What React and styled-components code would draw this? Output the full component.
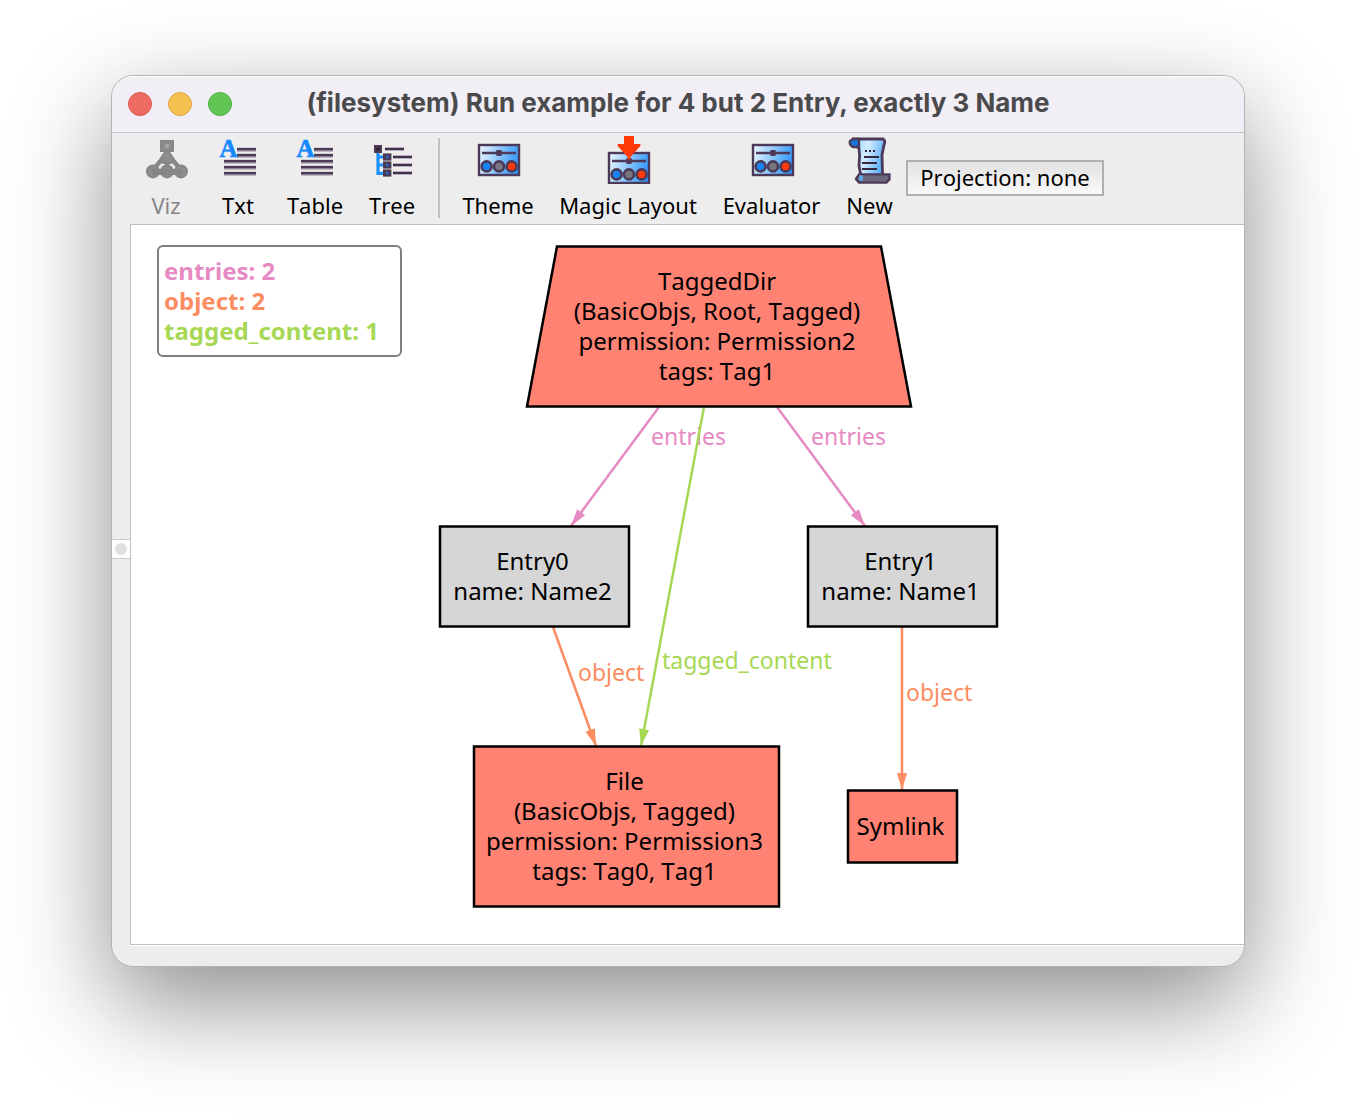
import React from "react";
import styled, { createGlobalStyle } from "styled-components";

const GlobalStyle = createGlobalStyle`
  *, *::before, *::after { box-sizing: border-box; }
  body {
    margin: 0;
    background: #ffffff;
    font-family: "Noto Sans", "DejaVu Sans", sans-serif;
    font-kerning: none;
    color: #000000;
  }
`;

const Desktop = styled.main`
  padding: 75px 111px 147px;
  overflow: hidden;
`;

const Window = styled.section`
  border: 1px solid #b4b4b4;
  border-radius: 22px;
  background: #ededed;
  overflow: hidden;
  box-shadow: 0 36px 100px rgba(0, 0, 0, 0.45);
`;

const TitleBar = styled.header`
  display: grid;
  grid-template-columns: 188px 1fr 188px;
  align-items: center;
  height: 57px;
  background: #f1eef5;
  border-bottom: 1px solid #c8c6ca;
  box-shadow: inset 0 1px 0 #ffffff;
`;

const Lights = styled.div`
  display: flex;
  gap: 16px;
  padding-left: 16px;
`;

const Light = styled.button`
  width: 24px;
  height: 24px;
  padding: 0;
  border: 1px solid ${(p) => p.$edge};
  border-radius: 50%;
  background: ${(p) => p.$fill};
`;

const Title = styled.h1`
  margin: 0;
  padding-bottom: 2px;
  font: 700 26px/32px Inter, "Liberation Sans", sans-serif;
  font-kerning: normal;
  color: #4a494c;
  text-align: center;
  white-space: nowrap;
`;

const ToolBar = styled.nav`
  display: flex;
  align-items: flex-start;
  height: 91px;
  padding: 3px 0 0 18px;
`;

const ToolButton = styled.button`
  display: flex;
  flex-direction: column;
  align-items: center;
  flex: none;
  width: ${(p) => p.$width}px;
  padding: 0;
  border: 0;
  background: none;
  font: 400 22px/30px "Noto Sans", "DejaVu Sans", sans-serif;
  font-kerning: none;
  color: #000000;
  white-space: nowrap;

  &:disabled { color: #868686; }
`;

const ToolIcon = styled.svg`
  display: block;
  width: 48px;
  height: 48px;
  margin-bottom: 6px;
`;

const Divider = styled.span`
  flex: none;
  width: 2px;
  height: 80px;
  margin: 2px 10px 0;
  background: #c2c2c2;
`;

const ProjectionButton = styled.button`
  min-width: 198px;
  height: 36px;
  margin-top: 24px;
  padding: 0 10px 2px;
  border: 2px solid #b0b0b0;
  background: linear-gradient(#e2e2e2, #f9f9f9);
  font: 400 22px/30px "Noto Sans", "DejaVu Sans", sans-serif;
  font-kerning: none;
  color: #000000;
  white-space: nowrap;
`;

const Body = styled.div`
  display: grid;
  grid-template-columns: 18px 1fr;
`;

const Gutter = styled.div`
  display: flex;
  align-items: center;
  padding-bottom: 72px;
`;

const Grip = styled.button`
  display: grid;
  place-items: center;
  width: 18px;
  height: 20px;
  padding: 0;
  border: solid #cccccc;
  border-width: 1px 0;
  background: #ffffff;

  &::before {
    content: "";
    width: 12px;
    height: 12px;
    border-radius: 50%;
    background: #e0e0e0;
  }
`;

const Canvas = styled.div`
  position: relative;
  height: 721px;
  border: solid #c0c0c0;
  border-width: 1px 0 1px 1px;
  background: #ffffff;
`;

const StatusStrip = styled.footer`
  height: 21px;
  margin-left: 18px;
  border-top: 1px solid #ffffff;
`;

const Legend = styled.ul`
  position: absolute;
  left: 26px;
  top: 20px;
  width: 245px;
  margin: 0;
  padding: 9px 5px;
  border: 2px solid #808080;
  border-radius: 6px;
  list-style: none;
  font: 700 24px/30px "Noto Sans", "DejaVu Sans", sans-serif;
  font-kerning: none;
`;

const LegendItem = styled.li`
  color: ${(p) => p.$color};
  white-space: nowrap;
`;

const EdgeLayer = styled.svg`
  position: absolute;
  left: 0;
  top: 0;
  width: 100%;
  height: 100%;
`;

const EdgeLabel = styled.span`
  position: absolute;
  left: ${(p) => p.$x}px;
  top: ${(p) => p.$y}px;
  font-size: 23px;
  line-height: 30px;
  color: ${(p) => p.$color};
  white-space: nowrap;
`;

const NodeBox = styled.article`
  position: absolute;
  left: ${(p) => p.$x}px;
  top: ${(p) => p.$y}px;
  display: flex;
  flex-direction: column;
  align-items: center;
  justify-content: center;
  width: ${(p) => p.$w}px;
  height: ${(p) => p.$h}px;
  padding-right: 4px;
  font-size: 24px;
  line-height: 30px;
  white-space: nowrap;
`;

const NodeShape = styled.svg`
  position: absolute;
  left: 0;
  top: 0;
  width: 100%;
  height: 100%;
  overflow: visible;
`;

const NodeLine = styled.span`
  position: relative;
`;

const PINK = "#e78ac3";
const ORANGE = "#fc8d62";
const GREEN = "#a6d854";
const SALMON = "#ff8272";
const GREY = "#d6d6d6";
const INK = "#4c3a58";

function VizIcon() {
  return (
    <ToolIcon viewBox="0 0 24 24" aria-hidden="true">
      <g fill="#8d8d8d" stroke="#868686">
        <path d="M12.5 7v11M10.500 11l-5 6M14.500 11l5 6" fill="none" strokeWidth="2.200" />
        <rect x="9.500" y="2.500" width="6" height="5" />
        <path d="M10.500 9.500l1.500-2h1l1.500 2 1.500 2.500-1.500 1.500h-4L9 12z" />
        <circle cx="5.500" cy="17.700" r="3" />
        <circle cx="12.500" cy="17.700" r="3" />
        <circle cx="19.500" cy="17.700" r="3" />
        <path d="M5 18h15" strokeWidth="3" />
      </g>
      <rect x="11.500" y="4" width="2" height="2" fill="#a6a6a6" />
    </ToolIcon>
  );
}

function TextIcon() {
  return (
    <ToolIcon viewBox="0 0 24 24" aria-hidden="true">
      <path
        d="M11.500 6.800H21M11.500 9.800H21M5 12.800h16M5 15.800h16M5 18.800h16"
        stroke="#8d8292"
        strokeWidth="1.900"
      />
      <path d="M11.500 6.500H21M11.500 9.500H21M5 12.500h16M5 15.500h16M5 18.500h16" stroke="#4d3a58" />
      <text
        x="2.700"
        y="10.600"
        fill="#1489ff"
        stroke="#1489ff"
        strokeWidth="0.300"
        fontFamily="Liberation Serif, serif"
        fontWeight="700"
        fontSize="12.500"
      >
        A
      </text>
    </ToolIcon>
  );
}

function TreeIcon() {
  return (
    <ToolIcon viewBox="0 0 24 24" aria-hidden="true">
      <path d="M5 8v11.500M5 10.500h3M5 14.500h3M5 18.700h3" fill="none" stroke="#1e90ff" strokeWidth="1.600" />
      <path
        d="M8.500 6.500H18M12.500 10.500h9.500M12.500 14.500h9.500M12.500 18.500h9.500"
        stroke="#a79cab"
        strokeWidth="1.800"
      />
      <path d="M8.500 6.500H18M12.500 10.500h9.500M12.500 14.500h9.500M12.500 18.500h9.500" stroke="#43304c" />
      <g fill="#4a3a52">
        <rect x="3" y="4.500" width="4" height="4" />
        <rect x="7.500" y="8.700" width="4.200" height="3.600" />
        <rect x="7.500" y="12.700" width="4.200" height="3.600" />
        <rect x="7.500" y="16.700" width="4.200" height="3.600" />
      </g>
      <g fill="#2a61c4">
        <rect x="4.300" y="5.800" width="1.400" height="1.400" fill="#2a1c30" />
        <rect x="9" y="9.800" width="1.300" height="1.400" />
        <rect x="9" y="13.800" width="1.300" height="1.400" />
        <rect x="9" y="17.800" width="1.300" height="1.400" />
      </g>
    </ToolIcon>
  );
}

function Mixer({ y }) {
  return (
    <g transform={`translate(0 ${y})`}>
      <rect x="2.500" y="0.500" width="20" height="15" fill="url(#panelBlue)" stroke={INK} strokeWidth="1.200" />
      <path d="M4 4.500h17" stroke={INK} strokeWidth="1.200" />
      <rect x="11.100" y="3" width="2.800" height="3" rx="0.600" fill={INK} />
      <g stroke={INK} strokeWidth="1.300">
        <circle cx="6.300" cy="11.200" r="2.500" fill="#1383f5" />
        <circle cx="12.500" cy="11.200" r="2.500" fill="#777681" />
        <circle cx="18.800" cy="11.200" r="2.500" fill="#fa3a0c" />
      </g>
    </g>
  );
}

function PanelIcon() {
  return (
    <ToolIcon viewBox="0 0 24 24" aria-hidden="true">
      <Mixer y={4} />
    </ToolIcon>
  );
}

function MagicIcon() {
  return (
    <ToolIcon viewBox="0 0 24 24" aria-hidden="true">
      <Mixer y={8} />
      <path d="M10 0h5v4h3.200v1l-5 5.500v1.200h-1.400v-1.200L6.800 5V4H10z" fill="#ff3a06" />
    </ToolIcon>
  );
}

function ScrollIcon() {
  return (
    <ToolIcon viewBox="0 0 24 24" aria-hidden="true">
      <path
        d="M4 1.500h14.500q1.500 1 .5 3l-1 5 .3 10.500H7.500l-1-5 .3-5-.3-3.500z"
        fill="url(#paperBlue)"
        stroke={INK}
        strokeWidth="1.400"
      />
      <path d="M3.500 1.500h3v4h-3q-2-1-1.500-3z" fill="#1675e4" stroke={INK} strokeWidth="1.200" />
      <path d="M6.500 19.200h15.200v2.600l-1.500 1.500H6.500L5 21.500z" fill="#6b6678" stroke={INK} strokeWidth="1.200" />
      <path d="M6.500 19.800h2v2.500h-2z" fill="#58a9f0" />
      <path d="M9.500 7.500h1M11.500 7.500h1M13.500 7.500h1M9 10.500h7.500M8 13.500h7.500M8 16.500h7.500" stroke="#33283c" />
    </ToolIcon>
  );
}

const tools = [
  { label: "Viz", icon: VizIcon, width: 72, disabled: true },
  { label: "Txt", icon: TextIcon, width: 72 },
  { label: "Table", icon: TextIcon, width: 82 },
  { label: "Tree", icon: TreeIcon, width: 72 },
  { divider: true },
  { label: "Theme", icon: PanelIcon, width: 96 },
  { label: "Magic Layout", icon: MagicIcon, width: 164 },
  { label: "Evaluator", icon: PanelIcon, width: 123 },
  { label: "New", icon: ScrollIcon, width: 73 },
];

const relations = [
  { text: "entries: 2", color: PINK },
  { text: "object: 2", color: ORANGE },
  { text: "tagged_content: 1", color: GREEN },
];

const edges = [
  { from: [528, 182], to: [440, 301], color: PINK },
  { from: [646, 182], to: [734, 301], color: PINK },
  { from: [573, 182], to: [510, 521], color: GREEN },
  { from: [422, 402], to: [465, 521], color: ORANGE },
  { from: [771, 402], to: [771, 565], color: ORANGE },
];

const labels = [
  { text: "entries", x: 520, y: 196, color: PINK },
  { text: "entries", x: 680, y: 196, color: PINK },
  { text: "tagged_content", x: 531, y: 420, color: GREEN },
  { text: "object", x: 447, y: 432, color: ORANGE },
  { text: "object", x: 775, y: 452, color: ORANGE },
];

const nodes = [
  {
    x: 396, y: 21, w: 384, h: 160, fill: SALMON, slant: 30,
    lines: ["TaggedDir", "(BasicObjs, Root, Tagged)", "permission: Permission2", "tags: Tag1"],
  },
  { x: 309, y: 301, w: 189, h: 100, fill: GREY, lines: ["Entry0", "name: Name2"] },
  { x: 677, y: 301, w: 189, h: 100, fill: GREY, lines: ["Entry1", "name: Name1"] },
  {
    x: 343, y: 521, w: 305, h: 160, fill: SALMON,
    lines: ["File", "(BasicObjs, Tagged)", "permission: Permission3", "tags: Tag0, Tag1"],
  },
  { x: 717, y: 565, w: 109, h: 72, fill: SALMON, lines: ["Symlink"] },
];

function Edge({ from, to, color }) {
  const angle = (Math.atan2(to[1] - from[1], to[0] - from[0]) * 180) / Math.PI;
  return (
    <g>
      <line x1={from[0]} y1={from[1]} x2={to[0]} y2={to[1]} stroke={color} strokeWidth="2.500" />
      <polygon points="0,0 -17,-5 -17,5" fill={color} transform={`translate(${to[0]} ${to[1]}) rotate(${angle})`} />
    </g>
  );
}

function Node({ x, y, w, h, fill, slant = 0, lines }) {
  return (
    <NodeBox $x={x} $y={y} $w={w} $h={h}>
      <NodeShape viewBox={`0 0 ${w} ${h}`} aria-hidden="true">
        <polygon
          points={`${slant},0.500 ${w - slant},0.500 ${w},${h + 0.5} 0,${h + 0.5}`}
          fill={fill}
          stroke="#000000"
          strokeWidth="2.500"
        />
      </NodeShape>
      {lines.map((line) => (
        <NodeLine key={line}>{line}</NodeLine>
      ))}
    </NodeBox>
  );
}

export default function App() {
  return (
    <Desktop>
      <GlobalStyle />
      <Window>
        <TitleBar>
          <Lights>
            <Light aria-label="Close" $fill="#ed6b60" $edge="#d9584e" />
            <Light aria-label="Minimize" $fill="#f5c04f" $edge="#dba93f" />
            <Light aria-label="Zoom" $fill="#62c655" $edge="#50ae43" />
          </Lights>
          <Title>(filesystem) Run example for 4 but 2 Entry, exactly 3 Name</Title>
        </TitleBar>
        <ToolBar>
          {tools.map(({ label, icon: Icon, width, disabled, divider }) =>
            divider ? (
              <Divider key="divider" />
            ) : (
              <ToolButton key={label} $width={width} disabled={disabled}>
                <Icon />
                {label}
              </ToolButton>
            )
          )}
          <ProjectionButton>Projection: none</ProjectionButton>
        </ToolBar>
        <Body>
          <Gutter>
            <Grip aria-label="Toggle side pane" />
          </Gutter>
          <Canvas>
            <Legend>
              {relations.map((r) => (
                <LegendItem key={r.text} $color={r.color}>{r.text}</LegendItem>
              ))}
            </Legend>
            {labels.map((l) => (
              <EdgeLabel key={`${l.text}-${l.x}`} $x={l.x} $y={l.y} $color={l.color}>{l.text}</EdgeLabel>
            ))}
            <EdgeLayer aria-hidden="true">
              <defs>
                <linearGradient id="panelBlue" x1="0" y1="0.300" x2="1" y2="0.500">
                  <stop offset="0" stopColor="#e6f3ff" />
                  <stop offset="0.550" stopColor="#7fc0fb" />
                  <stop offset="1" stopColor="#2f95f7" />
                </linearGradient>
                <linearGradient id="paperBlue" x1="0" y1="0.300" x2="1" y2="0.600">
                  <stop offset="0" stopColor="#a9d9ff" />
                  <stop offset="0.400" stopColor="#d2ecff" />
                  <stop offset="1" stopColor="#4ba6fb" />
                </linearGradient>
              </defs>
              {edges.map((e) => (
                <Edge key={`${e.from}-${e.to}`} {...e} />
              ))}
            </EdgeLayer>
            {nodes.map((n) => (
              <Node key={n.lines[0]} {...n} />
            ))}
          </Canvas>
        </Body>
        <StatusStrip />
      </Window>
    </Desktop>
  );
}
